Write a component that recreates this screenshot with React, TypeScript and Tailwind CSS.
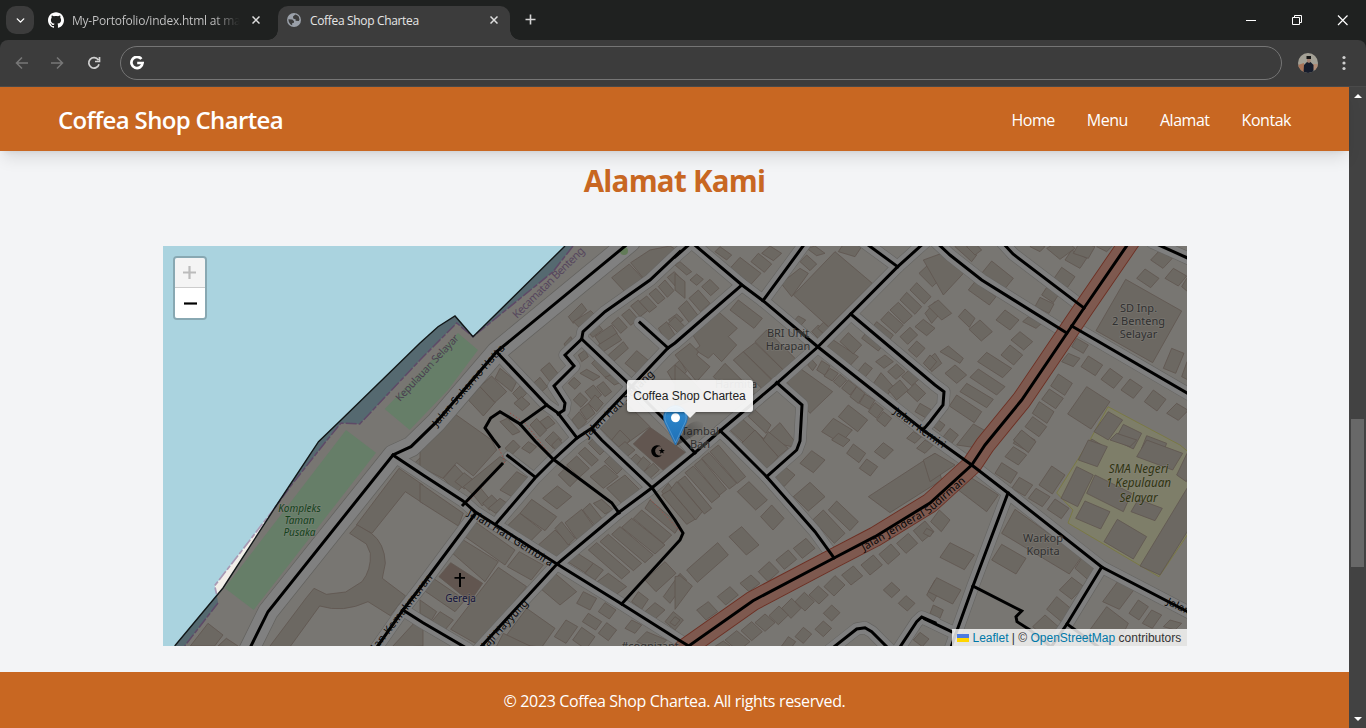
import React from 'react';
import { SiGithub } from 'react-icons/si';
import { ChevronDown } from 'lucide-react';

type Tile = { x: number; y: number; shapes: string; dark?: string };

// Building footprints in thirds of a pixel, one group per map tile.
// Footprints with three corners are completed to a parallelogram.
const tiles: Tile[] = [
  {
    x: 163, y: 440,
    shapes: '580,255 708,85 780,135 780,190 727,155 627,280|82,618 135,550 180,585 155,618|165,618 190,595 225,618 222,622|690,618 780,520 780,618 700,622|752,72 780,45 780,95 760,80',
  },
  {
    x: 420, y: 240,
    shapes: '575,113 628,72 668,115|632,68 690,30 750,18 770,30 690,112 668,112|445,230 485,190 500,210|460,245 512,212 528,228|575,250 595,232 622,262|605,225 628,207 655,238|632,198 655,180 683,212|658,185 680,168 710,200|687,162 708,145 735,175|715,140 735,120 762,152|742,112 763,95 790,125|500,270 530,248 548,270|525,290 575,255 592,280|535,315 590,280 605,300|565,345 610,305 625,325|615,370 650,332 690,365|715,265 740,245 765,285|745,240 770,222 790,240|432,312 452,290 466,312|362,390 388,368 415,402|340,430 360,412 382,440|145,480 180,440 225,488|180,440 215,408 260,455|225,415 240,385 290,425|278,460 300,438 320,460|282,490 305,470 330,492|445,430 462,412 482,430|460,480 480,458 503,480|475,345 495,330 505,350|480,400 500,388 540,410|515,370 535,350 578,395|555,412 580,402 608,425|495,455 520,435 545,465|505,490 525,465 550,490|530,440 550,425 575,455|480,510 505,490 525,520|455,540 478,515 500,545|330,555 350,535 380,570|360,545 385,528 405,550|240,545 262,535 300,575|375,600 400,575 425,600|530,555 620,490 690,560|742,395 780,360 800,395',
  },
  {
    x: 420, y: 440,
    shapes: '0,10 105,-78 215,0 230,30 160,108 110,68 68,115 0,80|70,115 105,75 145,118|105,125 132,98 160,120|130,140 240,50 260,60 160,165|160,165 180,142 207,175|188,190 215,165 235,185|205,205 240,175 262,190|240,150 290,95 335,120|255,25 280,0 300,20|305,25 325,5 350,20|395,15 415,-5 435,20|440,75 470,48 508,85|475,40 495,22 535,60|505,10 525,-10 560,25|415,105 440,80 475,115|510,110 555,75 595,110|553,65 570,48 608,85|560,145 615,105 665,155|368,175 412,138 455,170|300,220 335,178 410,230|262,258 300,220 365,270|355,315 405,270 450,315|405,265 425,245 465,295|435,248 485,208 525,265|488,210 510,190 545,235|520,190 545,178 580,210|575,0 600,-30 630,0|585,30 615,5 645,30|625,65 648,42 670,62|650,75 670,50 692,70|672,95 700,70 718,90|505,330 530,308 630,395|540,305 565,283 665,370|575,283 600,260 700,345|605,262 635,235 735,315|640,235 665,210 755,285|675,205 690,180 780,255|725,155 745,130 790,190|0,130 130,220 115,258 0,185|135,290 165,245 285,330|92,335 130,300 235,365 195,425|262,380 298,335 370,375|92,568 235,382 320,440 175,615|10,450 40,415 135,480|0,480 50,515 35,540 0,520|35,545 60,515 100,540|355,440 405,400 470,455|435,360 460,332 520,370|495,400 520,370 550,390|525,430 565,400 620,440|470,490 490,455 530,475|487,545 505,520 545,545|535,515 555,488 588,510|403,590 438,540 473,560|458,600 485,562 525,590|535,580 560,548 590,570|245,605 320,505 405,565 365,622|230,618 250,580 330,618|615,565 635,540 665,555|635,485 655,455 685,478|675,515 705,488 735,510|675,420 735,365 768,400|730,470 780,400 800,420|735,545 760,515 790,540|650,605 680,575 740,600',
    dark: '640,12 690,-38 800,40 740,100|57,410 92,368 188,430 150,485',
  },
  {
    x: 675, y: 240,
    shapes: '120,35 135,20 170,45|165,85 195,52 258,100|228,65 250,40 290,72|260,40 285,18 320,40|80,140 105,118 132,145|42,175 70,150 105,190|10,205 35,182 68,225|0,150 0,100 30,125|0,75 15,65 50,95|45,120 65,102 85,118|0,230 35,265 15,285|165,210 190,180 262,235|50,280 130,215 187,265 160,290 185,315 140,365 115,340 100,355 60,330 75,318|0,345 45,310 70,335 65,345 105,380 65,425|0,375 40,410 90,465 0,500|115,410 150,370 215,435|175,360 205,335 300,430|205,335 240,308 335,400|240,305 275,270 365,360|318,130 375,85 400,100 350,170|355,165 480,35 592,130 460,260|375,65 395,45 425,72|395,25 420,18 450,40|490,35 510,5 560,20|355,245 370,228 392,240|410,275 430,255 455,280|428,265 445,247 470,270|452,325 475,300 550,350|495,305 520,278 560,315|560,295 570,282 620,320|590,265 605,245 655,285|602,365 630,345 655,365|638,395 665,372 690,395|548,395 570,368 592,385|592,435 618,398 655,440|680,410 705,388 735,415|695,455 720,430 752,460|640,450 675,420 700,450|720,515 735,490 770,510|732,100 780,55 820,95|705,150 725,128 768,170|675,180 695,157 740,200|645,210 670,187 712,228|617,240 640,215 685,255|675,290 705,262 728,285|720,260 745,238 780,265|700,330 725,303 750,325|750,220 780,185 800,215|750,365 780,340 800,370|398,375 410,358 425,375|425,390 440,362 465,378|447,408 465,385 490,400|475,425 495,403 515,420|500,445 520,420 545,440|525,470 545,440 570,460|553,490 570,462 600,480|580,515 600,488 625,508|605,540 625,515 650,535|335,425 375,385 473,455 405,520|490,530 520,495 578,540|440,575 475,535 532,570|220,530 235,505 288,555|165,570 200,535 265,595|260,600 315,548 360,605 350,620',
  },
  {
    x: 675, y: 440,
    shapes: '105,35 130,15 212,110|80,55 102,38 185,130|58,75 80,57 155,148|30,98 55,78 135,168|8,125 30,108 110,205|-15,150 5,125 82,215|-40,165 -15,150 60,238|187,155 222,125 277,180|257,230 290,195 327,235|162,290 200,260 252,315|35,390 128,308 160,345|0,410 15,407 52,438 0,508|200,10 240,-30 310,50 275,90|265,0 280,-25 340,25 310,50|297,115 330,80 360,105|355,170 405,127 450,170|413,240 445,210 510,280|460,210 485,183 550,245|375,70 410,32 450,60|515,40 535,12 572,40|553,85 575,57 608,80|598,35 625,8 655,30|470,0 490,-20 525,0|580,170 780,40 800,120 645,218|65,510 100,485 128,515|127,470 165,440 190,465|195,430 228,405 255,430|250,395 283,365 312,395|303,360 340,330 365,358|355,325 393,295 420,325|447,440 480,407 510,435|500,405 535,378 563,408|558,375 595,345 622,375|612,343 648,312 675,342|665,310 700,280 728,310|715,272 750,243 777,275|402,465 430,438 460,465|360,485 388,457 418,485|320,505 350,475 378,505|282,527 312,498 340,525|240,548 270,522 300,548|198,572 230,545 262,575|150,600 185,572 225,605|110,625 145,603 175,625|445,520 470,495 495,518|420,568 445,543 470,565|360,590 385,562 410,582|320,618 340,590 362,605|625,450 650,427 675,450|670,490 693,467 720,490|755,465 780,420 800,440|715,600 735,577 762,597|0,530 15,540 0,558|695,-5 715,-25 740,-10|725,25 750,0 775,15',
  },
  {
    x: 930, y: 240,
    shapes: '-20,60 35,40 105,95 40,165|-5,200 25,180 65,220|75,20 90,0 140,45|110,20 130,5 155,30|155,100 185,63 250,115|115,150 135,125 198,170|85,230 105,207 135,235 118,262|117,268 150,240 187,275|198,240 225,210 267,240|315,200 330,172 372,192|335,165 350,142 385,165|372,115 395,82 435,110|405,60 425,30 470,55|430,40 450,5 495,20|350,25 400,-5 435,25 390,58|500,20 520,0 550,15|300,20 315,5 345,20|278,245 295,230 335,250|243,300 270,275 308,305|213,345 240,315 278,345|143,365 170,337 245,385|120,412 145,387 225,440|90,455 110,430 190,478|58,498 80,465 155,515|30,335 55,318 100,355 90,370|45,400 75,375 110,405|0,345 20,365 0,390|10,560 25,540 45,555|40,590 60,565 85,585|80,615 130,552 180,580 150,625|662,60 690,30 727,55|620,115 645,87 687,115|705,115 730,85 770,108|755,140 770,115 800,140|498,272 587,118 755,213 668,368|425,320 440,295 475,315|395,365 415,340 450,355|453,380 475,348 518,375|513,418 540,385 578,412|573,450 600,417 637,442|643,485 670,450 708,478|710,520 740,490 775,511|700,385 725,325 762,340|755,410 771,365 800,380|362,438 385,402 427,430|335,478 358,447 400,475|307,520 328,485 372,515|285,560 308,530 350,560|250,610 270,575 315,600|413,522 470,440 540,485|492,575 535,515 578,540|555,600 580,553 635,580|635,625 650,587 710,610|470,625 485,597 515,615',
  },
  {
    x: 930, y: 440,
    shapes: '250,0 275,-30 318,5 295,38|225,50 250,20 290,45|195,100 215,68 262,98|245,145 268,112 308,135|295,175 318,145 360,170|352,208 375,177 417,205|327,135 365,78 405,105|445,60 475,0 532,20|393,175 440,80 490,105|470,160 495,105 605,160|620,50 650,0 758,40|540,0 560,-20 620,0|740,105 771,40 800,60|437,235 465,183 540,215|603,215 625,178 697,205|522,305 562,238 650,290|630,378 771,145 800,230 690,405|-20,60 15,40 75,75 0,125|85,150 110,105 205,165 170,215|215,280 255,208 455,350 418,402|185,360 215,313 288,355|30,352 60,308 133,345|-5,455 20,413 93,450|0,520 10,495 40,510|2,245 28,210 60,240|-10,265 10,275 0,290|388,450 425,412 462,440|350,508 380,470 428,510|308,560 345,525 385,560|435,385 455,355 495,385 475,420|518,485 565,422 615,445|465,590 530,500 595,550 560,622|597,520 625,480 655,500|637,550 665,510 695,525|700,560 720,540 755,550',
  },
];

type Pt = [number, number];
const toPoints = (s: string): string => {
  const p = s.split(' ').map((q) => q.split(',').map(Number) as Pt);
  if (p.length === 3) p.push([p[0][0] + p[2][0] - p[1][0], p[0][1] + p[2][1] - p[1][1]]);
  return p.map((q) => q.join(',')).join(' ');
};

const streets = [
  '496.7,352 546.7,405 558,413 577,438',
  '680,251.7 650,280 605,311.7 583,331.7 581.7,339 565,355 574,366 554,386 565,403 564,410 558,414',
  '581.7,339 626.7,381.7 665,420 695,453',
  '640,322.7 668,348',
  '496.7,523 535,478 553,460 577,438 592,428 633,385 668,348 675,343 741.7,285',
  '690,241 742,285 763,300.7 818,347 923,430 971.7,465 1008,493 1101.7,567 1192,614',
  '763,300.7 806,242',
  '675,257 692,242',
  '925,242 897.7,266.7 850.7,314 817.7,347 777,383 720,431 695,452.7 675,469 652,487.7 618,513 557,564 479,649',
  '864,242 897.7,266.7',
  '850.7,314 935,385 944,391.7 943,405 930,421.7 923,430',
  '776.7,382.7 802,405 800,441 796.7,450 766.7,476.7',
  '720,430.7 730,440 766.7,476.7 815,531.7 834,558',
  '936,242 950,255 981.7,280 1066.7,333',
  '1002,242 1013,254 1084,308',
  '1071.7,326 1192,396',
  '1152,242 1192,260',
  '1008,493 973,586 950,650',
  '1101.7,567 1067,624 1049,650',
  '925,619 951.7,631.7',
  '830,650 856.7,629 865,627.7 871.7,631.7 890,650',
  '898,650 916.7,621.7 921.7,617 935,622.7',
  '393,455 423,475 463,501 475,511.7 557,564 621.7,604 680,640.7 692,648',
  '475,514 420,588 403,610 375,650',
  '403,610 423,622.7 468,649',
  '591.7,429 601.7,440 652,487.7',
];
const lanes = [
  '463,505 502,464',
  '507.7,455.7 535,477',
  '546.7,405 520,424',
  '499,446.7 493,439 485,428 490.7,418 500,411.7 520,424 535,441 553,459 611.7,502.7 619,513',
  '652,487.7 675,520 683,533 680,540 621.7,604',
  '973,586 1021.7,611 1016,616.7 1017,621.7 1030,630 1050,646',
  '1067,624 1100,648',
];
const hatta = '630,242 496.7,351.7 436.7,421.7 411,446.7 393,455 268,611.7 249,650';
const sudirman = '1130,241 1084,308 1021.7,400 985,445 971.7,465 930,503 875,536.7 834,558 753,600.7 683,650';

const lines = (list: string[], stroke: string, width: number) =>
  list.map((points) => <polyline key={points} points={points} stroke={stroke} strokeWidth={width} fill="none" strokeLinejoin="round" strokeLinecap="round" />);

const roadNames: { id: string; d: string; text: string; len: number; size?: number; fill?: string }[] = [
  { id: 'r1', d: 'M437,427 L500,354 L530,326', text: 'Jalan Sukarno Hatta', len: 104 },
  { id: 'r2', d: 'M588,438 L665,365', text: 'Jalan Hati Senang', len: 92 },
  { id: 'r3', d: 'M467,515 L475,519 L570,579', text: 'Jalan Hati Gembira', len: 98 },
  { id: 'r4', d: 'M370,659 L445,562', text: 'Jalan Kemakmuran', len: 103 },
  { id: 'r5', d: 'M464,673 L545,586', text: 'Jalan Haji Hayyung', len: 95 },
  { id: 'r6', d: 'M893,413 L923,435 L970,468', text: 'Jalan Kemiri', len: 61 },
  { id: 'r7', d: 'M864,551 L930,513 L995,456', text: 'Jalan Jenderal Sudirman', len: 124 },
  { id: 'r8', d: 'M1166,604 L1250,645', text: 'Jalan Pahlawan', len: 78 },
  { id: 'b1', d: 'M400,402 L475,322', text: 'Kepulauan Selayar', len: 87, size: 10.5, fill: '#4b3f50' },
  { id: 'b2', d: 'M517,319 L604,233', text: 'Kecamatan Benteng', len: 96, size: 11, fill: '#56465d' },
];

const places: { x: number; y: number; rows: string[]; step?: number; fill?: string; italic?: boolean; size?: number }[] = [
  { x: 299.5, y: 512, rows: ['Kompleks', 'Taman', 'Pusaka'], step: 12, fill: '#12421a', italic: true, size: 10 },
  { x: 788, y: 337, rows: ['BRI Unit', 'Harapan'] },
  { x: 736, y: 388, rows: ['Harmita'] },
  { x: 700, y: 435, rows: ['Tambal', 'Ban'] },
  { x: 1043, y: 541.5, rows: ['Warkop', 'Kopita'] },
  { x: 1138.5, y: 312, rows: ['SD Inp.', '2 Benteng', 'Selayar'] },
  { x: 1138.5, y: 473, rows: ['SMA Negeri', '1 Kepulauan', 'Selayar'], step: 14.3, fill: '#303410', italic: true, size: 11.7 },
  { x: 460.5, y: 602, rows: ['Gereja'], fill: '#15153c', size: 10 },
  { x: 650, y: 650, rows: ['#cognizant'] },
];

function StreetMap() {
  return (
    <svg className="block h-[400px] w-[1024px]" viewBox="163 246 1024 400">
      <rect x="163" y="246" width="1024" height="400" fill="#aad3df" />
      <polygon points="565,246 473,336.7 455,316 438,326.7 420,343 341,420 318.5,441.7 274.7,508 223,588 174.7,646 1187,646 1187,246" fill="#556970" />
      <polygon points="573,246 553,271.7 473,336.7 456.7,323 420,360 359.7,424 341,423 324.7,443 293,483 274.7,508 223,588 217,596 218,603 184.7,646 1187,646 1187,246" fill="#787672" />
      <polygon points="274.7,508 214.7,585.7 217,595 223,588" fill="#f2efe9" />
      <polygon points="346,430 376,452.7 253.7,610 224.7,588" fill="#667e68" />
      <polygon points="458,333 478,350 448,390 409.7,430 384.7,409" fill="#667e68" />
      <polygon points="1090,440 1108,406.7 1180,445 1192,455 1192,528 1159,576.7 1068,523 1073,510 1056.7,493" fill="#7e7e69" stroke="#79783f" strokeWidth=".9" />

      <g fill="none" stroke="#5e4a67" strokeWidth="1.5" strokeDasharray="11 2 5 2">
        <polyline points="573,246 553,271.7 473,336.7 456.7,323 420,360 359.7,424 341,423 324.7,443 293,483 274.7,508" />
        <polyline points="218,603 184.7,646" />
      </g>
      <polyline points="274.7,508 214.7,585.7 216.5,594" fill="none" stroke="#a899b4" strokeWidth="1.7" strokeDasharray="11 2 5 2" />

      {tiles.map((t) => (
        <g key={`${t.x}-${t.y}`} transform={`translate(${t.x} ${t.y}) scale(.33333)`} fill="#6c6862" stroke="#60564f" strokeWidth="2.4">
          {t.shapes.split('|').map((s) => <polygon key={s} points={toPoints(s)} />)}
          {t.dark?.split('|').map((s) => <polygon key={s} points={toPoints(s)} fill="#625650" />)}
        </g>
      ))}
      <path transform="translate(163 440) scale(.33333)" d="M560,280 L583,255 625,280 Q665,310 667,370 L658,415 728,468 682,527 615,485 Q540,520 470,498 L380,622 318,622 430,473 453,445 490,463 548,456 597,425 Q625,390 622,340 L610,312Z" fill="#6c6862" stroke="#60564f" strokeWidth="2.4" />

      {lines([hatta], '#63625f', 21)}
      {lines(streets, '#666562', 13)}
      {lines(['507.7,455.7 535,477'], '#666562', 9)}
      {lines([hatta], '#808080', 19.6)}
      {lines(streets, '#7f7f7f', 11.8)}
      {lines(['507.7,455.7 535,477'], '#7f7f7f', 7.8)}
      {lines([sudirman], '#6d3024', 20.5)}
      {lines([sudirman], '#7e594f', 18.7)}
      <g fill="none" stroke="#98504a" strokeWidth="1" strokeDasharray="1.5 2">
        <polyline points="510,413 525,423 555,461" />
        <polyline points="650,499 681,532" />
        <polyline points="466,504 505,462 497,444" />
      </g>
      <circle cx="624" cy="251" r="4" fill="#627b58" />

      <g strokeLinejoin="miter">
        {[...streets, ...lanes, hatta, sudirman].map((points) => (
          <polyline key={points} points={points} fill="none" stroke="#000" strokeWidth="3" strokeLinecap="square" />
        ))}
      </g>
      <polyline points="565,246 473,336.7 455,316 438,326.7 420,343 341,420 318.5,441.7 274.7,508 223,588 174.7,646" fill="none" stroke="#111718" strokeWidth="1.4" />

      <g fontFamily="'Noto Sans', sans-serif">
        {roadNames.map((r) => (
          <g key={r.id}>
            <path id={r.id} d={r.d} fill="none" />
            <text fontSize={r.size ?? 10.5} fill={r.fill ?? '#080808'}>
              <textPath href={`#${r.id}`} textLength={r.len}>{r.text}</textPath>
            </text>
          </g>
        ))}
        {places.map((p) =>
          p.rows.map((row, i) => (
            <text key={row + p.x} x={p.x} y={p.y + i * (p.step ?? 13)} textAnchor="middle" fontSize={p.size ?? 11} fontStyle={p.italic ? 'italic' : 'normal'} fill={p.fill ?? '#303030'} stroke="#85837f" strokeWidth="1.6" strokeOpacity=".45" paintOrder="stroke">{row}</text>
          ))
        )}
      </g>
      <path d="M459,573h2v4h4v1.8h-4v8.2h-2v-8.2h-4.5v-1.8h4.5z" fill="#000" />
      <path d="M661,446.5a6,6 0 1 0 1,8.4a4.6,4.6 0 1 1-1-8.4z" fill="#000" />
      <path d="M661.8,447.8l.8,2.1 2.3.1-1.8,1.4.7,2.2-2-1.2-1.9,1.3.6-2.3-1.7-1.4 2.2-.1z" fill="#000" />
    </svg>
  );
}

function Marker() {
  return (
    <svg className="absolute left-[500px] top-[159px] h-[41px] w-[45px]" viewBox="0 0 45 41">
      <defs>
        <linearGradient id="pin" x1="0" y1="0" x2="0" y2="1">
          <stop offset="0" stopColor="#2e8bd0" />
          <stop offset="1" stopColor="#1f6fb5" />
        </linearGradient>
        <linearGradient id="pinshade" x1="0" y1="1" x2="1" y2="0">
          <stop offset="0" stopOpacity=".5" />
          <stop offset="1" stopOpacity="0" />
        </linearGradient>
      </defs>
      <path d="M13 41L22 23Q31 13 40 18Q41 24 32 30Z" fill="url(#pinshade)" />
      <path d="M12.5.6C6 .6.7 5.9.7 12.4c0 3 1 5.4 2.500 8.200L12.500 40l9.300-19.400c1.500-2.800 2.500-5.200 2.500-8.200C24.300 5.900 19 .6 12.500.6z" fill="url(#pin)" stroke="#2a70ad" />
      <path d="M12.5 1.7C6.600 1.700 1.800 6.500 1.800 12.400c0 2.800 1 5 2.400 7.700l8.300 17.400 8.300-17.400c1.400-2.700 2.400-4.900 2.400-7.700 0-5.900-4.800-10.700-10.700-10.700z" fill="none" stroke="#fff" strokeOpacity=".2" />
      <circle cx="12.5" cy="12.8" r="4.5" fill="#fff" />
    </svg>
  );
}

function Browser() {
  return (
    <header className="h-[87px] shrink-0 bg-[#1f2120] font-['Open_Sans',sans-serif]">
      <div className="flex h-10 items-end">
        <button className="mb-[6px] ml-[6px] flex h-7 w-7 items-center justify-center rounded-[10px] bg-[#3c3c3c] text-white"><ChevronDown size={13} strokeWidth={2.6} /></button>
        <div className="flex h-10 w-[244px] items-center pl-[14px]">
          <SiGithub className="h-4 w-4 shrink-0 text-white" />
          <span className="ml-2 w-[168px] shrink-0 overflow-hidden bg-linear-to-r from-[#c7c7c7] from-85% to-[#1f2120] bg-clip-text pt-px text-[12px] tracking-[-0.22px] whitespace-nowrap text-transparent">My-Portofolio/index.html at main</span>
          <Cross className="ml-[12px] h-[8px] w-[8px] shrink-0" />
        </div>
        <div className="relative flex h-[34px] w-[232px] items-center rounded-t-[10px] bg-[#3c3c3c] pb-[6px] pl-[9px]">
          <div className="absolute bottom-0 -left-[10px] h-[10px] w-[10px] bg-[radial-gradient(circle_at_0_0,transparent_9.5px,#3c3c3c_10px)]" />
          <div className="absolute -right-[10px] bottom-0 h-[10px] w-[10px] bg-[radial-gradient(circle_at_100%_0,transparent_9.5px,#3c3c3c_10px)]" />
          <svg className="h-[14px] w-[14px]" viewBox="0 0 14 14">
            <circle cx="7" cy="7" r="7" fill="#9aa0a9" />
            <path d="M8.3 1.5L6 3.5l.2 2.100 2.600.9-.3 1.300 3.300.3.700-1.700-.8-2.900-1.600-1.300zM1.400 6.300l3.900.3 1.800 1.600-.4 1.700-1.400.2-.2 2.200C3.100 11.500 1.300 9.300 1.400 6.300z" fill="#3c3c3c" />
          </svg>
          <span className="ml-[9px] w-[180px] pt-[2px] text-[12px] tracking-[-0.34px] whitespace-nowrap text-[#e6e6e6]">Coffea Shop Chartea</span>
          <Cross className="h-[8px] w-[8px]" />
        </div>
        <svg className="mb-[15px] ml-[15px] h-[11px] w-[11px]" viewBox="0 0 11 11"><path d="M5.5.5v10M.5 5.5h10" stroke="#d5d5d5" strokeWidth="1.6" /></svg>
        <svg className="mr-[17px] mb-[14px] ml-auto h-[12px] w-[104px]" viewBox="0 0 104 12" fill="none" stroke="#fff">
          <path d="M1 6.5h10M47.5 3.5h7v7h-7zM49.5 3.5v-2h7v7h-2" />
          <path d="M93 1.5l9.500 9.500M102.500 1.500l-9.500 9.500" strokeWidth="1.2" />
        </svg>
      </div>
      <div className="flex h-[47px] items-center rounded-t-[8px] border-b border-[#4a4a4a] bg-[#3c3c3c]">
        <svg className="ml-[15px] h-[14px] w-[88px]" viewBox="0 0 88 14" fill="none" strokeWidth="1.5">
          <path d="M13 7H2M7 1.5L1.5 7 7 12.5M36 7h11M42 1.5L47.5 7 42 12.500" stroke="#777" />
          <path d="M83.3 4A5.2 5.2 0 1 0 84 8.2M84.5 1v4.500H80" stroke="#d0d0d0" strokeWidth="1.7" />
        </svg>
        <div className="ml-[17px] flex h-[34px] w-[1162px] items-center rounded-full border border-[#757575] pl-[9px]">
          <svg className="h-[14px] w-[14px]" viewBox="0 0 14 14" fill="none"><path d="M11.4 3A5.6 5.6 0 1 0 12.6 7H7.2" stroke="#fff" strokeWidth="2.7" /></svg>
        </div>
        <svg className="ml-[16px] h-5 w-5 rounded-full" viewBox="0 0 20 20">
          <rect width="20" height="20" fill="#a3a095" />
          <path d="M0 12l6-2v10H0z" fill="#a97458" /><path d="M15 11h5v6h-5z" fill="#b08b75" />
          <path d="M5.500 20l.5-8 3-3h3.500l3 3v8z" fill="#161c2b" />
          <path d="M9 5h3.500v4l-1.500 1-2-1z" fill="#a48272" /><path d="M8.500 3h4.500v3H8.500z" fill="#151515" />
        </svg>
        <svg className="ml-[24px] h-[16px] w-[4px]" viewBox="0 0 4 16" fill="#d0d0d0"><circle cx="2" cy="2.5" r="1.6" /><circle cx="2" cy="8" r="1.6" /><circle cx="2" cy="13.5" r="1.6" /></svg>
      </div>
    </header>
  );
}

function Cross({ className }: { className: string }) {
  return <svg className={className} viewBox="0 0 8 8"><path d="M.5.5l7 7M7.5.5l-7 7" stroke="#dedede" strokeWidth="1.5" /></svg>;
}

export default function App() {
  return (
    <div className="flex h-[728px] w-[1366px] flex-col overflow-hidden">
      <Browser />
      <div className="flex min-h-0 flex-1">
        <main className="flex w-[1349px] flex-col bg-[#f3f4f6] font-['Open_Sans',sans-serif]">
          <nav className="z-10 flex h-16 shrink-0 items-center justify-between bg-[#c86722] pr-[58px] pl-[58px] text-white shadow-lg">
            <span className="pt-px text-[24px] font-semibold tracking-[-0.66px] whitespace-nowrap">Coffea Shop Chartea</span>
            <div className="flex gap-8 pt-px text-[16px] tracking-[-0.47px]">
              <a>Home</a><a>Menu</a><a>Alamat</a><a>Kontak</a>
            </div>
          </nav>
          <h1 className="mt-[12px] h-9 text-center text-[29.5px] leading-9 font-bold tracking-[-0.75px] text-[#c86722]">Alamat Kami</h1>
          <section className="relative mx-auto mt-[47px] h-[400px] w-[1024px] shrink-0 overflow-hidden font-['Liberation_Sans',sans-serif]">
            <StreetMap />
            <Marker />
            <div className="absolute top-[10px] left-[10px] w-[34px] rounded-[4px] border-2 border-black/20 bg-clip-padding">
              <div className="flex h-[30px] items-center justify-center rounded-t-[2px] border-b border-[#ccc] bg-[#f4f4f4]">
                <svg className="h-[13px] w-[13px]" viewBox="0 0 13 13"><path d="M6.5 0v13M0 6.5h13" stroke="#bbb" strokeWidth="2.2" /></svg>
              </div>
              <div className="flex h-[30px] items-center justify-center rounded-b-[2px] bg-white">
                <svg className="ml-px h-[3px] w-[13px]" viewBox="0 0 13 3"><path d="M0 1.5h13" stroke="#000" strokeWidth="2.2" /></svg>
              </div>
            </div>
            <div className="absolute top-[134px] left-[464px] flex h-8 w-[126px] items-center justify-center rounded-[3px] bg-white/90 text-[12px] whitespace-nowrap text-[#222] shadow-[0_1px_3px_rgba(0,0,0,0.4)]">
              Coffea Shop Chartea
              <div className="absolute top-8 left-[57px] border-x-[6px] border-t-[6px] border-x-transparent border-t-white/90" />
            </div>
            <div className="absolute right-0 bottom-0 flex h-[17px] w-[235px] items-center bg-white/80 pl-[5px] text-[12px] whitespace-pre text-[#333]">
              <svg className="mr-[4px] h-2 w-3" viewBox="0 0 12 8"><path d="M0 0h12v4H0z" fill="#4c7be1" /><path d="M0 4h12v4H0z" fill="#ffd500" /></svg>
              <a className="text-[#0078a8]">Leaflet</a> | © <a className="text-[#0078a8]">OpenStreetMap</a> contributors
            </div>
          </section>
          <footer className="mt-auto flex h-14 shrink-0 items-center justify-center bg-[#c86722] pt-px text-[16px] tracking-[-0.35px] text-white">© 2023 Coffea Shop Chartea. All rights reserved.</footer>
        </main>
        <aside className="flex w-[17px] flex-col items-center bg-[#424242]">
          <div className="mt-[7px] border-x-[4px] border-b-[4px] border-x-transparent border-b-white" />
          <div className="mt-[321px] h-[148px] w-[13px] bg-[#686868]" />
          <div className="mt-auto mb-[7px] border-x-[4px] border-t-[4px] border-x-transparent border-t-white" />
        </aside>
      </div>
    </div>
  );
}
